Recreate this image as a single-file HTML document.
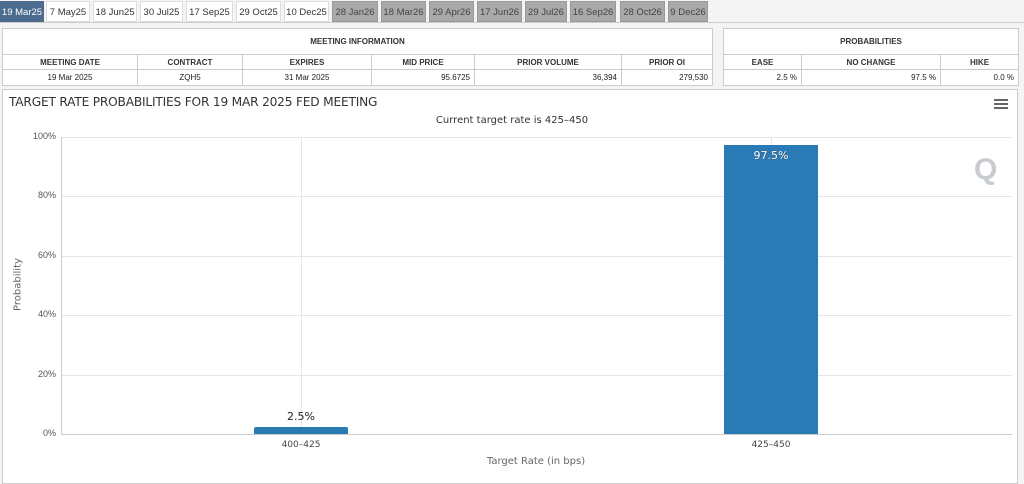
<!DOCTYPE html>
<html><head><meta charset="utf-8"><style>
*{margin:0;padding:0;box-sizing:border-box}
body{width:1024px;height:480px;background:#f4f4f4;font-family:"Liberation Sans",Arial,sans-serif;position:relative;overflow:hidden}
.tab{position:absolute;top:1px;height:21px;font-size:9.5px;line-height:21px;text-align:center;color:#333;background:#fff;border:1px solid #ddd}
.tab.g{background:#a9a9a9;color:#444;border-color:#999}
.tab.a{background:#4b6c8e;color:#fff;border-color:#4b6c8e}
.c{position:absolute;background:#fff;border:1px solid #ccc;font-size:8px;color:#222;display:flex;align-items:center;justify-content:center}
.h{font-weight:bold;color:#333}
.r{justify-content:flex-end;padding-right:4px}
.a{position:absolute}
.gl{position:absolute;left:61px;width:951px;height:1px;background:#e6e6e6}
.yl{position:absolute;left:20px;width:36px;text-align:right;font-size:9px;color:#555}
</style></head><body>
<div class="tab a" style="left:0;width:44px">19 Mar25</div>
<div class="tab" style="left:46px;width:44px">7 May25</div>
<div class="tab" style="left:93px;width:44px">18 Jun25</div>
<div class="tab" style="left:140px;width:43px">30 Jul25</div>
<div class="tab" style="left:186px;width:47px">17 Sep25</div>
<div class="tab" style="left:236px;width:45px">29 Oct25</div>
<div class="tab" style="left:284px;width:45px">10 Dec25</div>
<div class="tab g" style="left:332px;width:46px">28 Jan26</div>
<div class="tab g" style="left:381px;width:45px">18 Mar26</div>
<div class="tab g" style="left:429px;width:45px">29 Apr26</div>
<div class="tab g" style="left:477px;width:45px">17 Jun26</div>
<div class="tab g" style="left:525px;width:42px">29 Jul26</div>
<div class="tab g" style="left:570px;width:46px">16 Sep26</div>
<div class="tab g" style="left:620px;width:45px">28 Oct26</div>
<div class="tab g" style="left:668px;width:40px">9 Dec26</div>
<div class="a" style="left:0;top:22px;width:1024px;height:1px;background:#ccc"></div>

<div class="c h" style="left:2px;top:28px;width:711px;height:27px">MEETING INFORMATION</div>
<div class="c h" style="left:2px;top:54px;width:136px;height:16px">MEETING DATE</div>
<div class="c h" style="left:137px;top:54px;width:106px;height:16px">CONTRACT</div>
<div class="c h" style="left:242px;top:54px;width:130px;height:16px">EXPIRES</div>
<div class="c h" style="left:371px;top:54px;width:104px;height:16px">MID PRICE</div>
<div class="c h" style="left:474px;top:54px;width:148px;height:16px">PRIOR VOLUME</div>
<div class="c h" style="left:621px;top:54px;width:92px;height:16px">PRIOR OI</div>
<div class="c" style="left:2px;top:69px;width:136px;height:17px">19 Mar 2025</div>
<div class="c" style="left:137px;top:69px;width:106px;height:17px">ZQH5</div>
<div class="c" style="left:242px;top:69px;width:130px;height:17px">31 Mar 2025</div>
<div class="c r" style="left:371px;top:69px;width:104px;height:17px">95.6725</div>
<div class="c r" style="left:474px;top:69px;width:148px;height:17px">36,394</div>
<div class="c r" style="left:621px;top:69px;width:92px;height:17px">279,530</div>

<div class="c h" style="left:723px;top:28px;width:296px;height:27px">PROBABILITIES</div>
<div class="c h" style="left:723px;top:54px;width:79px;height:16px">EASE</div>
<div class="c h" style="left:801px;top:54px;width:140px;height:16px">NO CHANGE</div>
<div class="c h" style="left:940px;top:54px;width:79px;height:16px">HIKE</div>
<div class="c r" style="left:723px;top:69px;width:79px;height:17px">2.5 %</div>
<div class="c r" style="left:801px;top:69px;width:140px;height:17px">97.5 %</div>
<div class="c r" style="left:940px;top:69px;width:79px;height:17px">0.0 %</div>

<div class="a" style="left:2px;top:89px;width:1016px;height:395px;background:#fff;border:1px solid #ccc"></div>
<div class="a" style="left:9px;top:95px;font-size:12.2px;color:#333;font-family:'DejaVu Sans',sans-serif;letter-spacing:-0.2px">TARGET RATE PROBABILITIES FOR 19 MAR 2025 FED MEETING</div>
<div class="a" style="left:994px;top:99px;width:14px;height:2px;background:#666;box-shadow:0 4px 0 #666,0 8px 0 #666"></div>
<div class="a" style="left:0;width:1024px;top:115px;text-align:center;font-size:10px;color:#333;font-family:'DejaVu Sans',sans-serif">Current target rate is 425–450</div>

<div class="gl" style="top:137px"></div><div class="gl" style="top:196px"></div><div class="gl" style="top:256px"></div><div class="gl" style="top:315px"></div><div class="gl" style="top:375px"></div>
<div class="a" style="left:301px;top:137px;width:1px;height:297px;background:#e6e6e6"></div>
<div class="a" style="left:771px;top:137px;width:1px;height:297px;background:#e6e6e6"></div>
<div class="a" style="left:61px;top:137px;width:1px;height:298px;background:#ccc"></div>
<div class="a" style="left:61px;top:434px;width:951px;height:1px;background:#ccc"></div>
<div class="yl" style="top:131px">100%</div><div class="yl" style="top:190px">80%</div><div class="yl" style="top:250px">60%</div><div class="yl" style="top:309px">40%</div><div class="yl" style="top:369px">20%</div><div class="yl" style="top:428px">0%</div>
<div class="a" style="left:-12px;top:279px;width:60px;text-align:center;transform:rotate(-90deg);font-size:10px;color:#666;font-family:'DejaVu Sans',sans-serif">Probability</div>

<div class="a" style="left:254px;top:427px;width:94px;height:7px;background:#2a7ab5;border-radius:2px 2px 0 0"></div>
<div class="a" style="left:724px;top:145px;width:94px;height:289px;background:#2a7ab5"></div>
<div class="a" style="left:254px;top:410px;width:94px;text-align:center;font-size:11px;color:#222;font-family:'DejaVu Sans',sans-serif">2.5%</div>
<div class="a" style="left:724px;top:149px;width:94px;text-align:center;font-size:11px;color:#fff;font-family:'DejaVu Sans',sans-serif;text-shadow:0 0 1px #333">97.5%</div>
<div class="a" style="left:254px;top:440px;width:94px;text-align:center;font-size:9px;color:#444;font-family:'DejaVu Sans',sans-serif">400–425</div>
<div class="a" style="left:724px;top:440px;width:94px;text-align:center;font-size:9px;color:#444;font-family:'DejaVu Sans',sans-serif">425–450</div>
<div class="a" style="left:0;width:1072px;top:456px;text-align:center;font-size:10px;color:#666;font-family:'DejaVu Sans',sans-serif">Target Rate (in bps)</div>
<div class="a" style="left:974px;top:153px;font-size:30px;font-weight:bold;color:#c8ccd0">Q</div>
</body></html>
